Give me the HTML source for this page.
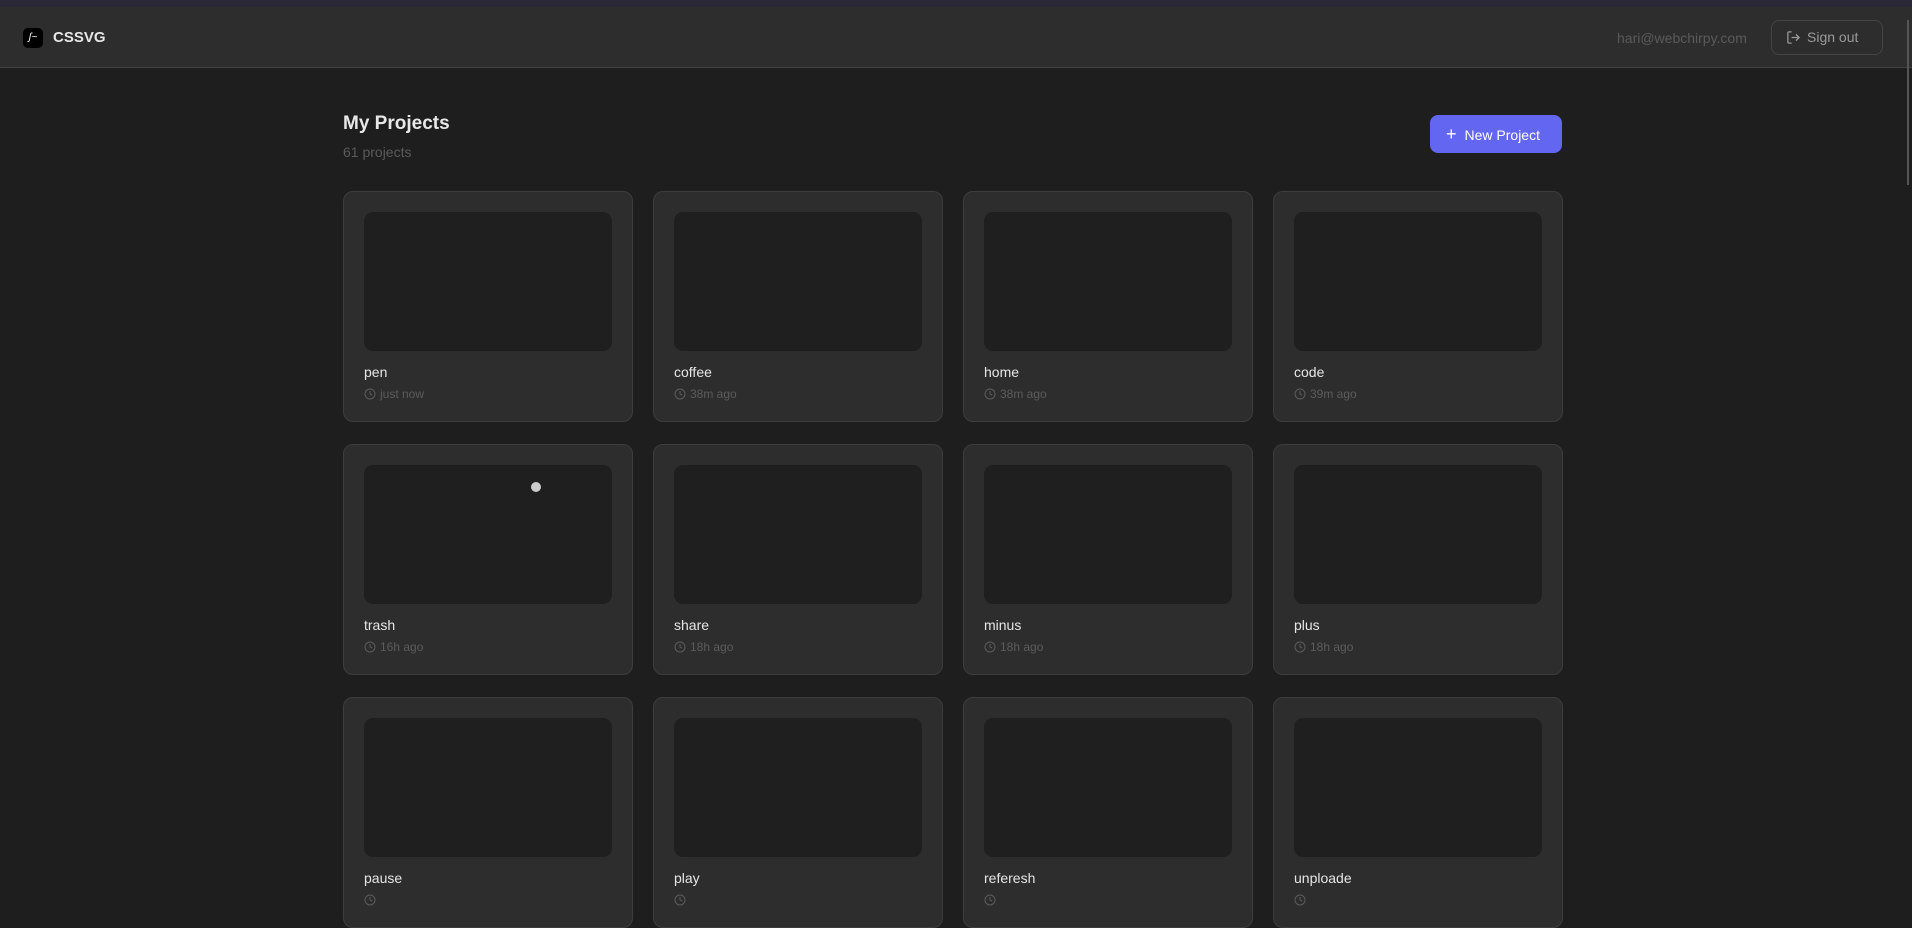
<!DOCTYPE html>
<html><head><meta charset="utf-8"><style>
*{box-sizing:border-box;margin:0;padding:0}
html,body{width:1912px;height:880px;overflow:hidden;background:#1e1e1e;font-family:"Liberation Sans",sans-serif}
.strip{position:absolute;left:0;top:0;width:1912px;height:7px;background:#2a2836}
.hdr{position:absolute;left:0;top:7px;width:1912px;height:61px;background:#2d2d2d;border-bottom:1px solid #414141}
.logo{position:absolute;left:23px;top:21px;width:20px;height:20px;background:#000;border-radius:5px;color:#fff;font-size:10px;text-align:center;line-height:20px;font-style:italic}
.brand{position:absolute;left:53px;top:22px;color:#e6e6e6;font-size:15px;font-weight:bold}
.email{position:absolute;left:1617px;top:23px;color:#5a5a5a;font-size:14px}
.so{position:absolute;left:1771px;top:13px;width:112px;height:35px;border:1px solid #444;border-radius:8px;color:#9a9a9a;font-size:14px;line-height:33px;padding-left:14px}
.so svg{vertical-align:-3px;margin-right:6px}
.sb{position:absolute;left:1907px;top:20px;width:2px;height:165px;background:#555}
h1{position:absolute;left:343px;top:113px;color:#e8e8e8;font-size:19px;font-weight:bold}
.cnt{position:absolute;left:343px;top:144px;color:#5a5a5a;font-size:14px}
.np{position:absolute;left:1430px;top:115px;width:132px;height:38px;background:#6366f1;border-radius:8px;color:#fff;font-size:14px;line-height:38px;padding-left:16px}
.card{position:absolute;width:290px;height:231px;background:#2d2d2d;border:1px solid #3d3d3d;border-radius:10px}
.pv{position:absolute;left:20px;top:20px;width:248px;height:139px;background:#1f1f1f;border-radius:9px}
.nm{position:absolute;left:20px;top:172px;color:#e6e6e6;font-size:14px}
.tm{position:absolute;left:20px;top:195px;color:#5c5c5c;font-size:12px}
.tm svg{vertical-align:-2px;margin-right:4px}
</style></head><body>
<div class="strip"></div>
<div class="hdr">
<div class="logo">ʃ~</div><div class="brand">CSSVG</div>
<div class="email">hari@webchirpy.com</div>
<div class="so"><svg width="15" height="15" viewBox="0 0 24 24" fill="none" stroke="#9a9a9a" stroke-width="2"><path d="M9 21H5a2 2 0 0 1-2-2V5a2 2 0 0 1 2-2h4M16 17l5-5-5-5M21 12H9"/></svg>Sign out</div>
</div>
<div class="sb"></div>
<h1>My Projects</h1>
<div class="cnt">61 projects</div>
<div class="np"><span style="font-size:18px;margin-right:8px">+</span>New Project</div>
<div id="g"></div>
<script>
var n=[["pen","just now"],["coffee","38m ago"],["home","38m ago"],["code","39m ago"],["trash","16h ago"],["share","18h ago"],["minus","18h ago"],["plus","18h ago"],["pause",""],["play",""],["referesh",""],["unploade",""]];
var xs=[343,653,963,1273],ys=[191,444,697],h="";
var ic='<svg width="12" height="12" viewBox="0 0 24 24" fill="none" stroke="#5c5c5c" stroke-width="2"><circle cx="12" cy="12" r="10"/><path d="M12 6v6l4 2"/></svg>';
n.forEach(function(c,i){h+='<div class="card" style="left:'+xs[i%4]+'px;top:'+ys[Math.floor(i/4)]+'px"><div class="pv">'+(i==4?'<div style="position:absolute;left:167px;top:17px;width:10px;height:10px;border-radius:50%;background:#ccc"></div>':'')+'</div><div class="nm">'+c[0]+'</div><div class="tm">'+ic+c[1]+'</div></div>'});
document.getElementById("g").innerHTML=h;
</script>
</body></html>
